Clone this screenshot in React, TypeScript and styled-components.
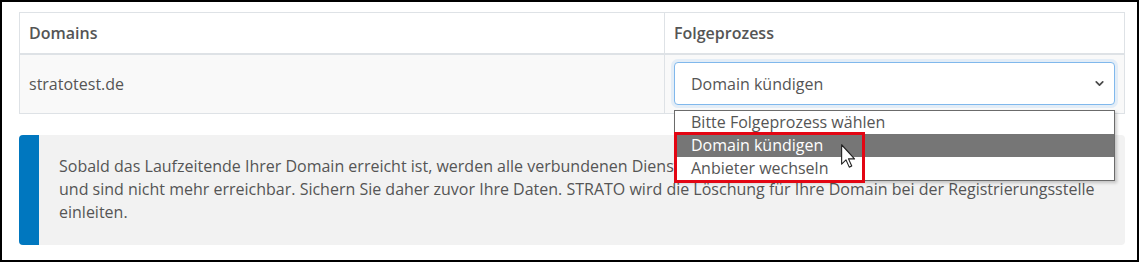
import { createGlobalStyle, styled } from "styled-components";
import { ChevronDown } from "lucide-react";

const GlobalStyle = createGlobalStyle`
  html, body {
    margin: 0;
    padding: 0;
    background: #fff;
  }
  * {
    box-sizing: border-box;
  }
`;

const options = [
  "Bitte Folgeprozess wählen",
  "Domain kündigen",
  "Anbieter wechseln",
];

const App = () => {
  return (
    <>
      <GlobalStyle />
      <Frame>
        <DomainTable>
          <thead>
            <tr>
              <HeadCell style={{ width: "645px" }}>Domains</HeadCell>
              <HeadCell>Folgeprozess</HeadCell>
            </tr>
          </thead>
          <tbody>
            <tr>
              <BodyCell>stratotest.de</BodyCell>
              <BodyCell>
                <SelectWrap>
                  <SelectBox>
                    Domain kündigen
                    <ChevronDown size={13} strokeWidth={3.2} color="#4a4a4a" />
                  </SelectBox>
                  <OptionList>
                    {options.map((label) => (
                      <OptionItem key={label} $active={label === "Domain kündigen"}>
                        {label}
                      </OptionItem>
                    ))}
                    <Highlight />
                    <Cursor width="15" height="24" viewBox="0 0 12 19">
                      <path
                        d="M0.5 0.5 L0.5 16 L4 12.6 L6.6 18.4 L8.6 17.5 L6 11.8 L10.8 11.8 Z"
                        fill="#fff"
                        stroke="#222"
                        strokeWidth="0.9"
                        strokeLinejoin="round"
                      />
                    </Cursor>
                  </OptionList>
                </SelectWrap>
              </BodyCell>
            </tr>
          </tbody>
        </DomainTable>
        <Notice>
          <NoticeBar />
          <NoticeText>
            Sobald das Laufzeitende Ihrer Domain erreicht ist, werden alle
            verbundenen Dienste dieser Domain gelöscht
            <br />
            und sind nicht mehr erreichbar. Sichern Sie daher zuvor Ihre Daten.
            STRATO wird die Löschung für Ihre Domain bei der Registrierungsstelle
            einleiten.
          </NoticeText>
        </Notice>
      </Frame>
    </>
  );
};

export default App;

const Frame = styled.div`
  position: relative;
  width: 1139px;
  height: 262px;
  padding: 10px 12px 0 17px;

  border: 2px solid #000;
  background: #fff;
  font-family: "Open Sans", "Liberation Sans", sans-serif;
  color: #555;
`;

const DomainTable = styled.table`
  width: 1106px;
  border-collapse: collapse;
  border: 1px solid #dee2e6;
`;

const HeadCell = styled.th`
  height: 41px;
  padding: 0 9px;

  text-align: left;
  font-size: 16px;
  font-weight: 600;
  color: #555;

  border-right: 1px solid #dee2e6;
  border-bottom: 2px solid #dee2e6;
`;

const BodyCell = styled.td`
  height: 60px;
  padding: 0 9px;

  font-size: 16px;
  background-color: #f9f9f9;
  border-right: 1px solid #dee2e6;
  border-bottom: 1px solid #dee2e6;
`;

const SelectWrap = styled.div`
  position: relative;
  z-index: 2;
`;

const SelectBox = styled.div`
  display: flex;
  justify-content: space-between;
  align-items: center;

  height: 43px;
  padding: 0 8px 0 16px;

  font-size: 16px;
  color: #555;
  background-color: #fff;
  border: 1px solid #80b8ec;
  border-radius: 4px;
  box-shadow: 0 0 0 3px rgba(128, 184, 236, 0.18);
`;

const OptionList = styled.div`
  position: absolute;
  top: 48px;
  left: 0;
  right: 0;

  display: flex;
  flex-direction: column;

  background-color: #fff;
  border: 1px solid #6b6b6b;
  box-shadow: 2px 2px 3px rgba(0, 0, 0, 0.2);
`;

const OptionItem = styled.div<{ $active?: boolean }>`
  height: 23px;
  padding-left: 16px;

  font-size: 16px;
  line-height: 23px;
  color: ${({ $active }) => ($active ? "#fff" : "#555")};
  background-color: ${({ $active }) => ($active ? "#767676" : "transparent")};
`;

const Highlight = styled.div`
  position: absolute;
  top: 21px;
  left: -1px;

  width: 191px;
  height: 51px;

  border: 3px solid #e30613;
`;

const Cursor = styled.svg`
  position: absolute;
  top: 33px;
  left: 166px;
`;

const Notice = styled.div`
  display: flex;

  width: 1106px;
  height: 110px;
  margin-top: 21px;

  background-color: #f2f2f2;
  border-radius: 4px;
  overflow: hidden;
`;

const NoticeBar = styled.div`
  flex: 0 0 20px;
  background-color: #0077bf;
`;

const NoticeText = styled.p`
  margin: 0;
  padding: 20px 22px 0 20px;

  font-size: 16px;
  line-height: 23px;
  color: #555;
`;
